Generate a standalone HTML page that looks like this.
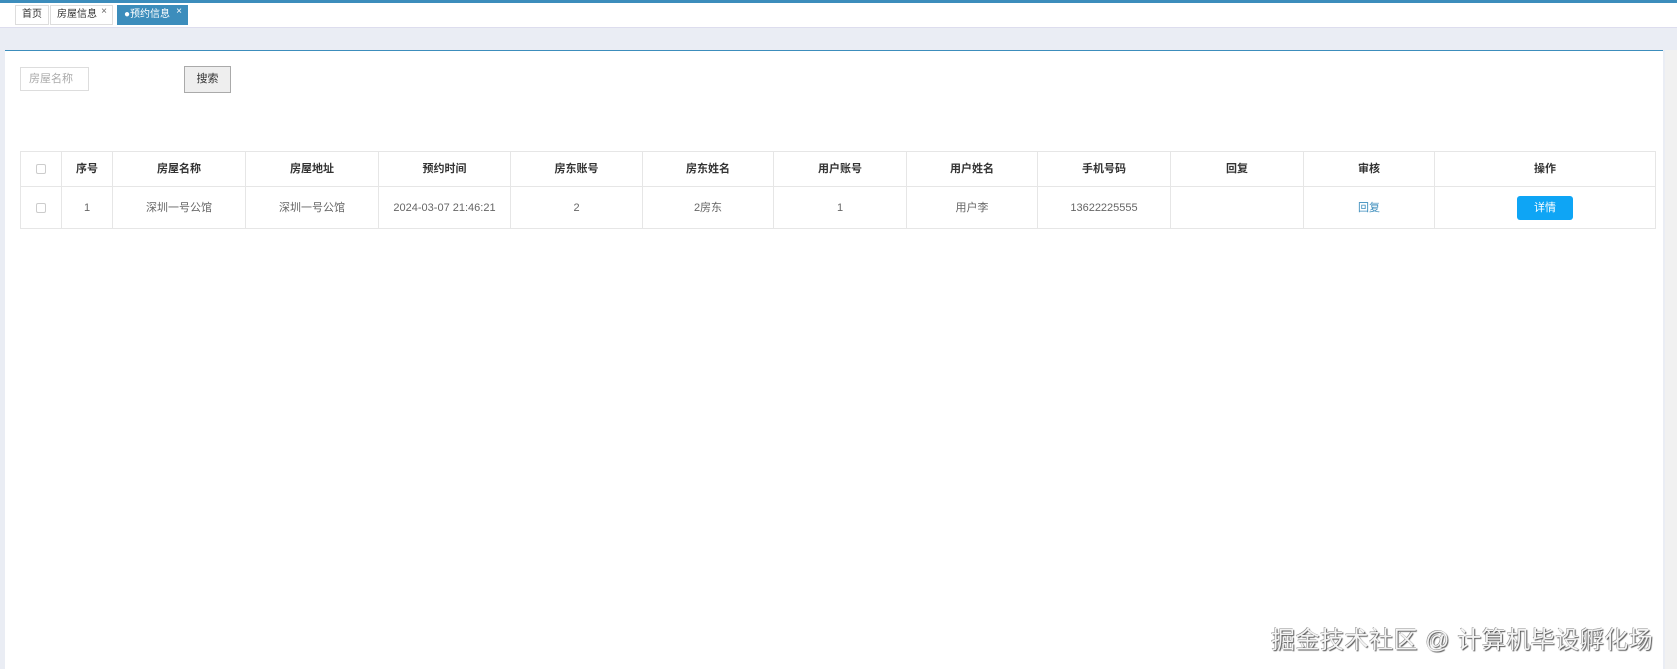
<!DOCTYPE html>
<html><head><meta charset="utf-8"><style>
*{margin:0;padding:0;box-sizing:border-box}
body{width:1677px;height:669px;overflow:hidden;background:#eaedf4;font-family:"Liberation Sans","Noto Sans CJK SC",sans-serif;position:relative;font-size:11px;color:#333}
.topline{position:absolute;left:0;top:0;width:1677px;height:3px;background:#3c8dbc}
.tabbar{position:absolute;left:0;top:3px;width:1677px;height:25px;background:#fff;border-bottom:1px solid #dde}
.tab{position:absolute;top:2px;height:20px;border:1px solid #ddd;background:#fff;font-size:10px;line-height:18px;padding-left:6px;color:#333}
.tab .x{position:absolute;right:5px;top:-3px;font-size:10px;color:#666}
.panel{position:absolute;left:5px;top:50px;width:1658px;height:619px;background:#fff;border-top:1px solid #3c8dbc}
.sb{position:absolute;left:1665px;top:50px;width:12px;height:619px;background:#f1f1f1}
.inp{position:absolute;left:20px;top:67px;width:69px;height:24px;border:1px solid #ddd;color:#aaa;font-size:11px;line-height:22px;padding-left:8px}
.btn{position:absolute;left:184px;top:66px;width:47px;height:27px;border:1px solid #aaa;background:#eee;font-size:11px;line-height:25px;text-align:center}
table{position:absolute;left:20px;top:151px;width:1636px;border-collapse:collapse;table-layout:fixed}
td,th{border:1px solid #e6e6e6;text-align:center;font-size:11px;line-height:14px;vertical-align:middle}
th{height:35px;font-weight:bold;color:#333}
td{height:42px;color:#666}
td span,th span{vertical-align:middle}
.cb{display:inline-block;width:10px;height:10px;border:1px solid #ccc;border-radius:2px}
.d{display:inline-block;width:56px;height:24px;background:#0ea5f5;color:#fff;border-radius:3px;line-height:24px}
.wm{position:absolute;left:1271px;top:620px;font-size:24px;color:#f4f4f4;text-shadow:1px 1px 1px #555,-0.5px -0.5px 0 #888;letter-spacing:0.5px}
</style></head><body>
<div class="topline"></div>
<div class="tabbar">
<div class="tab" style="left:15px;width:34px">首页</div>
<div class="tab" style="left:50px;width:63px">房屋信息<span class="x">×</span></div>
<div class="tab" style="left:117px;width:71px;background:#3c8dbc;border-color:#3c8dbc;color:#fff">●预约信息<span class="x" style="color:#fff">×</span></div>
</div>
<div class="panel"></div>
<div class="sb"></div>
<div class="inp">房屋名称</div>
<div class="btn">搜索</div>
<table>
<colgroup><col style="width:41px"><col style="width:51px"><col style="width:133px"><col style="width:133px"><col style="width:132px"><col style="width:132px"><col style="width:131px"><col style="width:133px"><col style="width:131px"><col style="width:133px"><col style="width:133px"><col style="width:131px"><col></colgroup>
<tr><th><span class="cb"></span></th><th>序号</th><th>房屋名称</th><th>房屋地址</th><th>预约时间</th><th>房东账号</th><th>房东姓名</th><th>用户账号</th><th>用户姓名</th><th>手机号码</th><th>回复</th><th>审核</th><th>操作</th></tr>
<tr><td><span class="cb"></span></td><td>1</td><td>深圳一号公馆</td><td>深圳一号公馆</td><td>2024-03-07 21:46:21</td><td>2</td><td>2房东</td><td>1</td><td>用户李</td><td>13622225555</td><td></td><td style="color:#3c8dbc">回复</td><td><span class="d">详情</span></td></tr>
</table>
<div class="wm">掘金技术社区 @ 计算机毕设孵化场</div>
</body></html>
